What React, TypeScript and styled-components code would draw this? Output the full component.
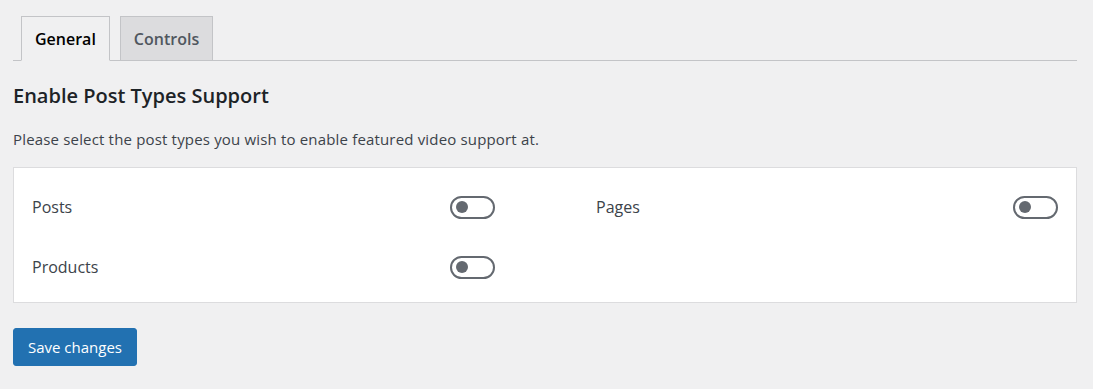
import React, { useState } from "react";
import styled, { createGlobalStyle } from "styled-components";

const Global = createGlobalStyle`
  html, body {
    margin: 0;
    padding: 0;
    background: #f0f0f1;
  }
  body {
    font-family: "Open Sans", "Noto Sans", Arial, sans-serif;
    color: #3c434a;
  }
`;

const Page = styled.div`
  padding: 16px 16px 0 13px;
  box-sizing: border-box;
  width: 1093px;
  height: 389px;
`;

const TabBar = styled.nav`
  display: flex;
  gap: 10px;
  padding-left: 8px;
  border-bottom: 1px solid #c3c4c7;
`;

const Tab = styled.button<{ $active?: boolean }>`
  box-sizing: border-box;
  height: 45px;
  margin-bottom: -1px;
  padding: 0 13px;
  font-family: inherit;
  font-size: 16px;
  font-weight: 600;
  border: 1px solid #c3c4c7;
  border-bottom-color: ${(p) => (p.$active ? "#f0f0f1" : "#c3c4c7")};
  background: ${(p) => (p.$active ? "#f0f0f1" : "#dcdcde")};
  color: ${(p) => (p.$active ? "#000" : "#50575e")};
  cursor: pointer;
`;

const Heading = styled.h2`
  margin: 20px 0 0;
  font-size: 20px;
  font-weight: 600;
  color: #1d2327;
  line-height: 30px;
`;

const Description = styled.p`
  margin: 16px 0 0;
  font-size: 15px;
  letter-spacing: 0.17px;
  line-height: 24px;
  color: #3c434a;
`;

const Card = styled.div`
  margin-top: 16px;
  background: #fff;
  border: 1px solid #dcdcde;
  padding: 9px 18px 5px 18px;
  display: grid;
  grid-template-columns: 463px 1fr;
`;

const Cell = styled.div`
  display: flex;
  align-items: center;
  justify-content: space-between;
  height: 60px;
`;

const RightCol = styled.div`
  padding-left: 101px;
`;

const Label = styled.span`
  font-size: 16px;
  color: #3c434a;
`;

const Switch = styled.button<{ $on?: boolean }>`
  box-sizing: border-box;
  width: 45px;
  height: 23px;
  border-radius: 12px;
  border: 2px solid ${(p) => (p.$on ? "#2271b1" : "#646970")};
  background: ${(p) => (p.$on ? "#2271b1" : "#fff")};
  position: relative;
  padding: 0;
  cursor: pointer;
  &::after {
    content: "";
    position: absolute;
    top: 3.5px;
    left: ${(p) => (p.$on ? "26px" : "4px")};
    width: 12px;
    height: 12px;
    border-radius: 50%;
    background: ${(p) => (p.$on ? "#fff" : "#646970")};
  }
`;

const SaveButton = styled.button`
  margin-top: 25px;
  height: 38px;
  padding: 0 14px;
  background: #2271b1;
  border: 1px solid #2271b1;
  border-radius: 3px;
  color: #fff;
  font-family: inherit;
  font-size: 15px;
  cursor: pointer;
`;

const Toggle: React.FC<{ label: string }> = ({ label }) => {
  const [on, setOn] = useState(false);
  return (
    <Cell>
      <Label>{label}</Label>
      <Switch $on={on} onClick={() => setOn(!on)} aria-pressed={on} aria-label={label} />
    </Cell>
  );
};

export default function App() {
  const [tab, setTab] = useState("general");
  return (
    <Page>
      <Global />
      <TabBar>
        <Tab $active={tab === "general"} onClick={() => setTab("general")}>General</Tab>
        <Tab $active={tab === "controls"} onClick={() => setTab("controls")}>Controls</Tab>
      </TabBar>
      <Heading>Enable Post Types Support</Heading>
      <Description>Please select the post types you wish to enable featured video support at.</Description>
      <Card>
        <Toggle label="Posts" />
        <RightCol>
          <Toggle label="Pages" />
        </RightCol>
        <Toggle label="Products" />
      </Card>
      <SaveButton>Save changes</SaveButton>
    </Page>
  );
}
